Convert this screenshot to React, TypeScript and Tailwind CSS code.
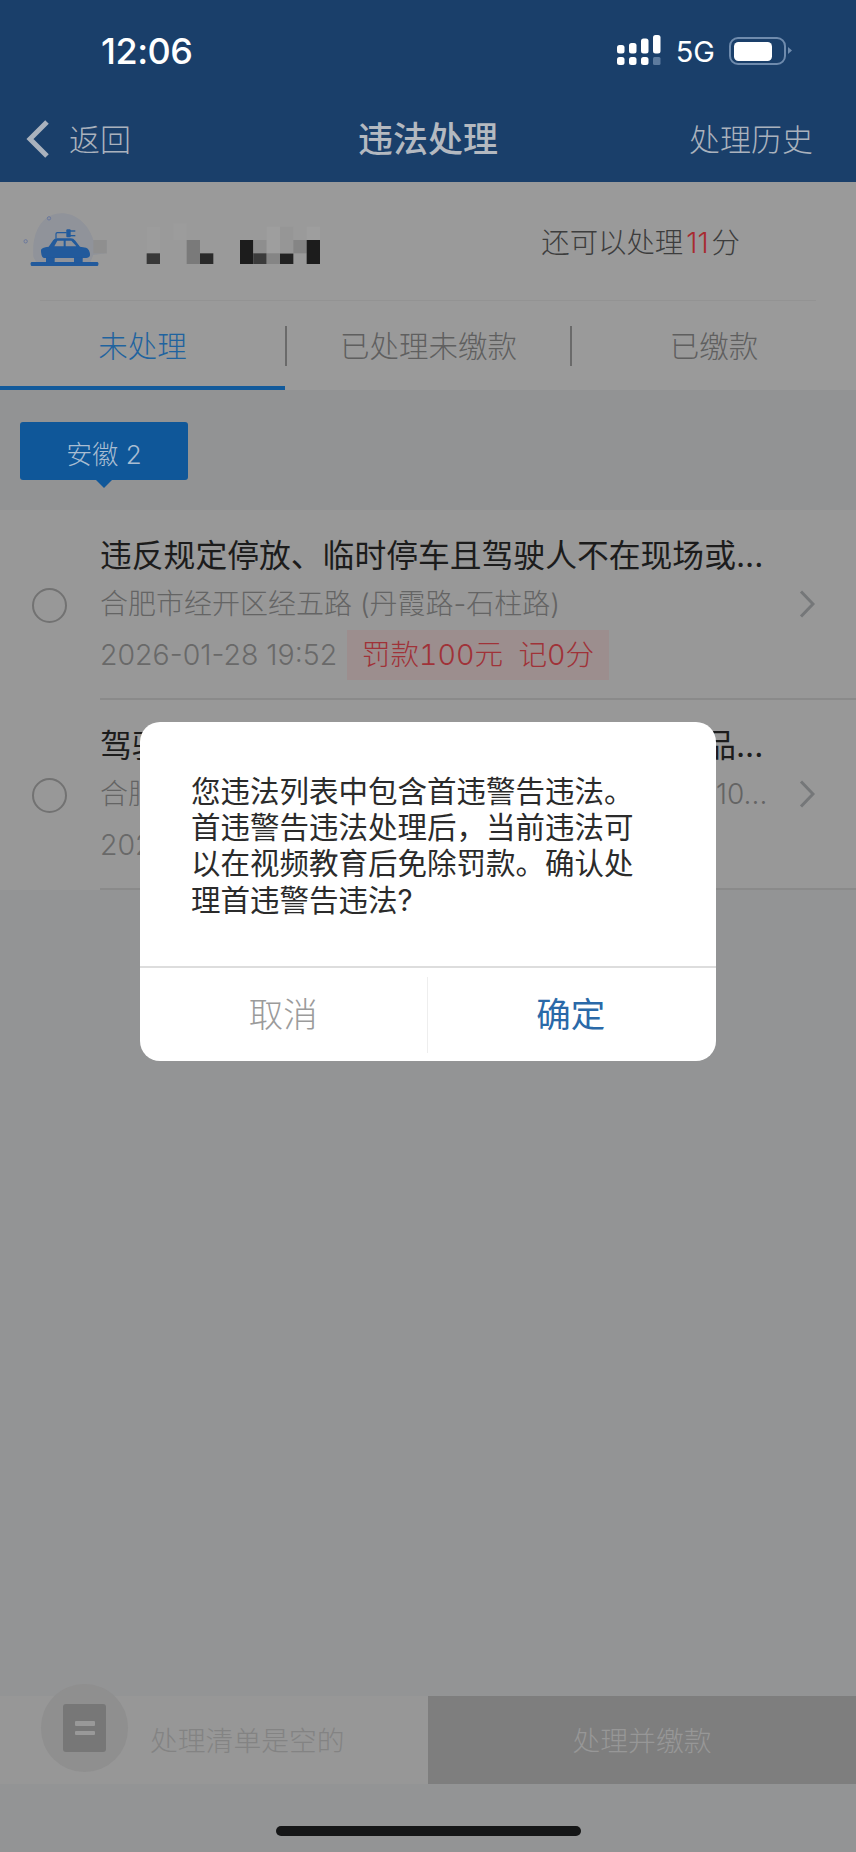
const CN = "font-['Inter','Noto_Sans_CJK_SC',sans-serif]";

function SignalFull() {
  return (
    <svg width="44" height="32" viewBox="0 0 44 32" className="block">
      <g fill="#ffffff">
        <rect x="0" y="10" width="7.5" height="8.5" rx="2.5" />
        <rect x="12" y="8" width="7.5" height="10.5" rx="2.5" />
        <rect x="24" y="3.5" width="7.5" height="15" rx="2.5" />
        <rect x="36" y="0" width="7.5" height="18.5" rx="2.5" />
        <rect x="0" y="22" width="7.5" height="8" rx="2.5" />
        <rect x="12" y="22" width="7.5" height="8" rx="2.5" />
        <rect x="24" y="22" width="7.5" height="8" rx="2.5" />
      </g>
      <rect x="36" y="22" width="7.5" height="8" rx="1.5" fill="#5d7b9e" />
    </svg>
  );
}

function Battery() {
  return (
    <svg width="64" height="28" viewBox="0 0 64 28" className="block">
      <rect x="1" y="1" width="55" height="26" rx="8" fill="none" stroke="#6f8bad" strokeWidth="2" />
      <rect x="5" y="5" width="38" height="19" rx="4.5" fill="#ffffff" />
      <path d="M59 10 L63 13.5 L59 17 Z" fill="#6f8bad" />
    </svg>
  );
}

function Vehicle() {
  return (
    <svg width="340" height="90" viewBox="0 0 1020 270" className="block">
      <defs>
        <filter id="soft"><feGaussianBlur stdDeviation="1.5" /></filter>
        <filter id="softer"><feGaussianBlur stdDeviation="0.8" /></filter>
      </defs>
      <g filter="url(#soft)">
        <path d="M100 170 C95 90 130 40 185 40 C225 40 265 70 280 120 L320 120 L320 160 L280 165 L270 190 L110 190 Z" fill="#90939a" />
        <circle cx="147" cy="55" r="5" fill="none" stroke="#63729c" strokeWidth="2.5" />
        <circle cx="77" cy="124" r="5" fill="none" stroke="#63729c" strokeWidth="2.5" />
        <rect x="280" y="120" width="40" height="40" fill="#8f8f8f" />
        <rect x="440" y="80" width="40" height="80" fill="#9c9c9c" />
        <rect x="440" y="160" width="40" height="32" fill="#383838" />
        <rect x="520" y="70" width="40" height="50" fill="#9c9c9c" />
        <rect x="560" y="120" width="40" height="72" fill="#7a7a7a" />
        <rect x="600" y="160" width="40" height="32" fill="#2a2a2a" />
        <rect x="720" y="120" width="40" height="72" fill="#1e1e1e" />
        <rect x="760" y="120" width="40" height="40" fill="#8e8e8e" />
        <rect x="760" y="160" width="40" height="32" fill="#3a3a3a" />
        <rect x="800" y="80" width="40" height="80" fill="#9e9e9e" />
        <rect x="800" y="160" width="40" height="32" fill="#858585" />
        <rect x="840" y="160" width="40" height="32" fill="#242424" />
        <rect x="840" y="80" width="40" height="80" fill="#969696" />
        <rect x="880" y="120" width="40" height="40" fill="#858585" />
        <rect x="920" y="80" width="40" height="40" fill="#9e9e9e" />
        <rect x="920" y="120" width="40" height="72" fill="#1f1f1f" />
      </g>
      <g filter="url(#softer)">
        <rect x="92" y="186" width="203" height="12" rx="4" fill="#205a9c" />
        <path fillRule="evenodd" fill="#205a9c" d="M123 150 Q124 142 146 140 L160 120 Q163 115 172 115 L212 115 Q220 115 226 122 L240 140 L258 143 Q270 148 270 166 Q268 174 258 174 L132 174 Q123 172 123 150 Z M163 139 L172 122 L191 122 L191 139 Z M197 139 L197 122 L214 122 L229 139 Z" />
        <rect x="138" y="172" width="26" height="16" rx="3" fill="#205a9c" />
        <rect x="222" y="172" width="26" height="16" rx="3" fill="#205a9c" />
        <rect x="199" y="88" width="13" height="24" rx="3" fill="#205a9c" />
        <rect x="210" y="91" width="16" height="4" fill="#205a9c" />
        <rect x="210" y="105" width="16" height="4" fill="#205a9c" />
        <path d="M168 116 L168 101 Q168 98 172 98 L200 98" fill="none" stroke="#205a9c" strokeWidth="3.5" />
      </g>
    </svg>
  );
}

function Radio() {
  return <div className="h-[35px] w-[35px] shrink-0 rounded-full border-2 border-[#727272]" />;
}

function Chevron() {
  return (
    <svg width="16" height="28" viewBox="0 0 16 28" className="block shrink-0">
      <path d="M2 1.5 L14 14 L2 26.5" fill="none" stroke="#757779" strokeWidth="3" />
    </svg>
  );
}

function Row({ title, place }: { title: string; place: string }) {
  return (
    <div className="flex items-center pl-[32px]">
      <Radio />
      <div className="ml-[33px] flex h-[190px] flex-1 items-center border-b-2 border-[#8a8a8a]">
        <div className="min-w-0 flex-1 self-start pt-[24px]">
          <div className="h-[44px] whitespace-nowrap text-[31.8px] font-normal leading-[44px] text-[#1c1c1c]">{title}</div>
          <div className="mt-[4px] h-[44px] whitespace-nowrap text-[28px] font-light leading-[44px] text-[#646464]">{place}</div>
          <div className="mt-[4px] flex h-[50px] items-center">
            <span className="w-[247px] whitespace-nowrap text-[28.5px] font-light text-[#696969]">2026-01-28 19:52</span>
            <span className="flex h-[50px] w-[262px] items-center justify-center whitespace-pre bg-[#9c8e8e] text-[28.6px] font-light tabular-nums text-[#a03238]">罚款100元  记0分</span>
          </div>
        </div>
        <div className="mr-[41px]">
          <Chevron />
        </div>
      </div>
    </div>
  );
}

export default function App() {
  return (
    <div className={`relative flex h-[1852px] w-[856px] flex-col overflow-hidden bg-[#939495] ${CN}`}>
      <header className="h-[182px] shrink-0 bg-[#1a3f6a]">
        <div className="flex h-[92px] items-center justify-between pl-[101px] pr-[63px] pt-[10px]">
          <span className="text-[36px] font-medium leading-none tracking-[-0.5px] text-white">12:06</span>
          <div className="flex items-center">
            <SignalFull />
            <span className="ml-[15px] mr-[14px] text-[29px] font-normal leading-none text-white">5G</span>
            <Battery />
          </div>
        </div>
        <div className="flex h-[90px] items-center justify-between pl-[26px] pr-[43px] pt-[4px]">
          <div className="flex w-[317px] items-center">
            <svg width="24" height="38" viewBox="0 0 24 38" className="block">
              <path d="M21 2 L4 19 L21 36" fill="none" stroke="#aab2bd" strokeWidth="5" />
            </svg>
            <span className="ml-[19px] text-[31px] font-light leading-none text-[#aab2bd]">返回</span>
          </div>
          <span className="text-[35px] font-medium leading-none text-[#b4b9c0]">违法处理</span>
          <div className="flex w-[300px] justify-end">
            <span className="text-[31px] font-light leading-none text-[#aab2bd]">处理历史</span>
          </div>
        </div>
      </header>

      <section className="shrink-0 bg-[#9a9a9a]">
        <div className="flex h-[118px] items-center justify-between pr-[116px]">
          <div className="mt-[8px]">
            <Vehicle />
          </div>
          <span className="mt-[4px] whitespace-nowrap text-[28.4px] font-light leading-none text-[#3d3d3d]">
            还可以处理<span className="mx-[3px] text-[#a82a30]">11</span>分
          </span>
        </div>
        <div className="mx-[40px] h-[1px] bg-[#939393]" />
        <div className="flex h-[85px] pt-[5px]">
          <div className="flex w-[285px] items-center justify-center text-[29.5px] font-light text-[#1f639f]">未处理</div>
          <div className="my-[20px] w-[2px] bg-[#6a6a6a]" />
          <div className="flex w-[283px] items-center justify-center text-[29.5px] font-light text-[#5f5f5f]">已处理未缴款</div>
          <div className="my-[20px] w-[2px] bg-[#6a6a6a]" />
          <div className="flex flex-1 items-center justify-center text-[29.5px] font-light text-[#5f5f5f]">已缴款</div>
        </div>
        <div className="h-[4px] w-[285px] bg-[#125a9b]" />
      </section>

      <div className="h-[120px] shrink-0 bg-[#929394] pl-[20px] pt-[32px]">
        <div className="relative flex h-[58px] w-[168px] items-center justify-center rounded-[3px] bg-[#0f5799] pt-[8px] text-[26px] font-light leading-none text-[#a9bdd2]">
          安徽 2
          <div className="absolute left-[76px] top-[58px] h-0 w-0 border-x-[8px] border-t-[8px] border-x-transparent border-t-[#0f5799]" />
        </div>
      </div>

      <section className="shrink-0 bg-[#989898]">
        <Row title="违反规定停放、临时停车且驾驶人不在现场或..." place="合肥市经开区经五路 (丹霞路-石柱路)" />
        <Row title="驾驶载货汽车违反规定装载运输危险化学物品..." place="合肥市经开区繁华大道与锦绣大道交口向东方向约10..." />
      </section>

      <div className="flex-1" />

      <footer className="relative flex h-[88px] shrink-0 bg-[#979797]">
        <div className="flex w-[428px] items-center pl-[150px] pt-[4px] text-[27.8px] font-light text-[#838383]">处理清单是空的</div>
        <div className="flex flex-1 items-center justify-center bg-[#7e7e7e] pt-[4px] text-[27.8px] font-light text-[#979797]">处理并缴款</div>
        <div className="absolute left-[41px] top-[-12px] flex h-[88px] w-[87px] items-center justify-center rounded-full bg-[#8f8f8f]">
          <div className="flex h-[48px] w-[43px] flex-col items-center justify-center gap-[5px] rounded-[3px] bg-[#777777]">
            <div className="h-[5px] w-[20px] rounded-[1px] bg-[#999999]" />
            <div className="h-[4px] w-[20px] rounded-[1px] bg-[#999999]" />
          </div>
        </div>
      </footer>
      <div className="flex h-[68px] shrink-0 justify-center pt-[42px]">
        <div className="h-[10px] w-[305px] rounded-[5px] bg-[#151617]" />
      </div>

      <div className="absolute left-[140px] top-[722px] flex h-[339px] w-[576px] flex-col overflow-hidden rounded-[20px] bg-white">
        <div className="h-[244px] px-[51px] pt-[51px] text-[29.5px] font-normal leading-[36.2px] text-[#2b2b2b]">
          <div className="whitespace-nowrap">您违法列表中包含首违警告违法。</div>
          <div className="whitespace-nowrap">{"首违警告违法处理后\uFF0C当前违法可"}</div>
          <div className="whitespace-nowrap">以在视频教育后免除罚款。确认处</div>
          <div className="whitespace-nowrap">理首违警告违法?</div>
        </div>
        <div className="h-[2px] bg-[#dddddd]" />
        <div className="flex flex-1 items-center pt-[1px]">
          <div className="flex flex-1 items-center justify-center text-[34.5px] font-light leading-none text-[#9b9b9b]">取消</div>
          <div className="h-[76px] w-[1px] bg-[#eeeeee]" />
          <div className="flex flex-1 items-center justify-center pr-[2px] text-[34.5px] font-normal leading-none text-[#2a69a8]">确定</div>
        </div>
      </div>
    </div>
  );
}
